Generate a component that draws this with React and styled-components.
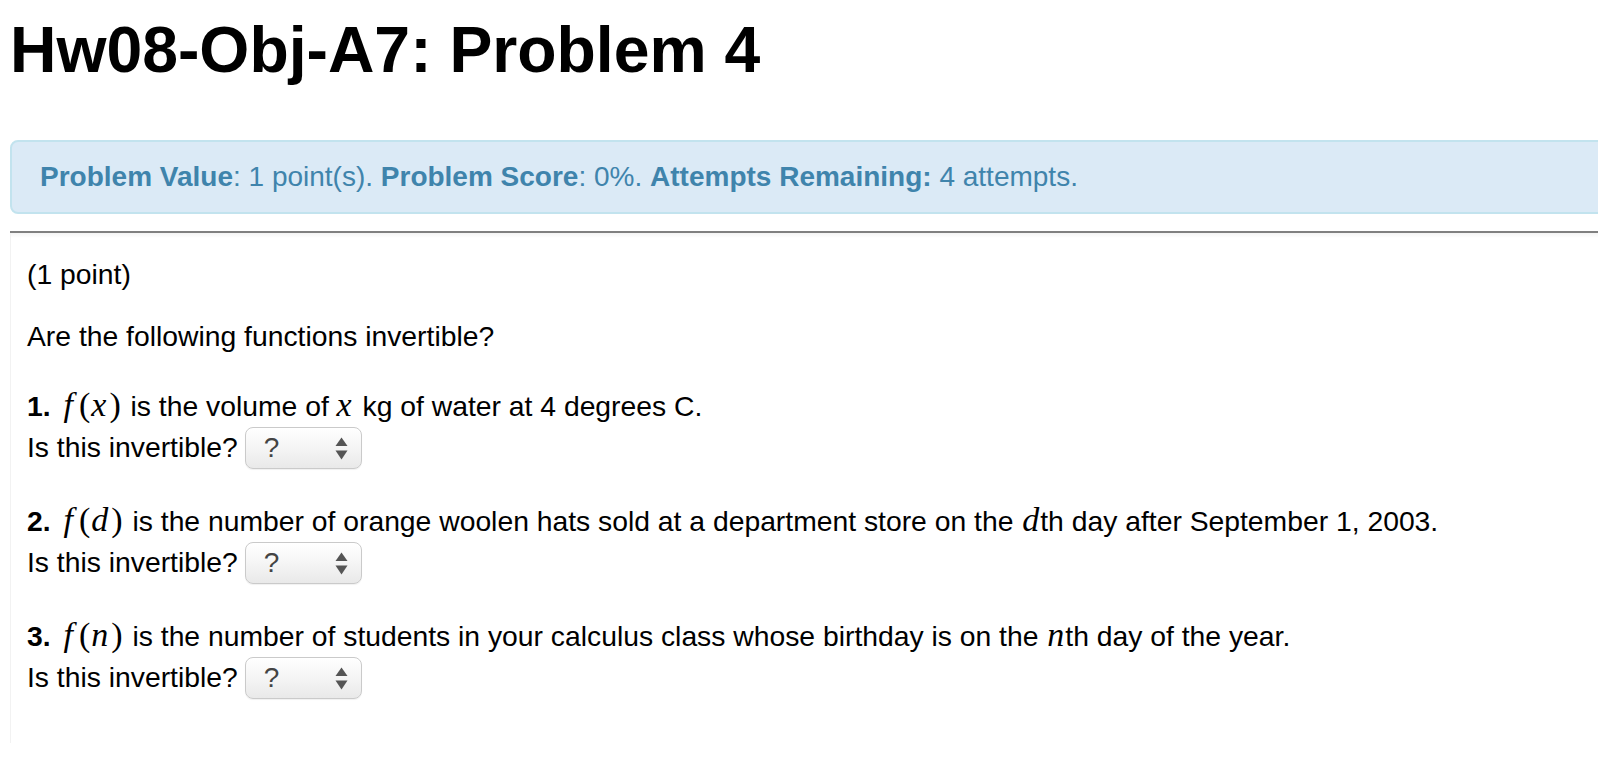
import React from 'react';
import styled, { createGlobalStyle } from 'styled-components';

const GlobalStyle = createGlobalStyle`
    html, body {
        margin: 0;
        padding: 0;
        background: #ffffff;
        overflow: hidden;
    }
    body {
        font-family: "Liberation Sans", Arial, Helvetica, sans-serif;
        color: #000000;
    }
`;

const Page = styled.div`
    width: 1640px;
    padding: 15px 0 0 10px;
`;

const Title = styled.h1`
    margin: 0 0 55px 0;
    font-size: 64.3px;
    line-height: 70px;
    font-weight: bold;
`;

const Alert = styled.div`
    background-color: #dbeaf6;
    border: 2px solid #c2e3ee;
    border-radius: 8px;
    padding: 15px 28px;
    color: #3f84ac;
    font-size: 28px;
    line-height: 40px;
`;

const Rule = styled.div`
    margin-top: 17px;
    height: 2px;
    background-color: #808080;
`;

const Problem = styled.div`
    box-sizing: border-box;
    height: 510px;
    border-left: 1px solid #f2f2f2;
    padding: 21px 0 0 16px;
    background: linear-gradient(#f4f4f4, #ffffff 5px);
    font-size: 28.3px;
    line-height: 41px;
`;

const Para = styled.div`
    margin-top: ${p => p.$gap || 0}px;
`;

const Line = styled.div`
    height: 41px;
    white-space: nowrap;
`;

const MathVar = styled.i`
    display: inline-block;
    font-family: "Liberation Serif", "Times New Roman", serif;
    font-size: 34px;
    line-height: 1;
    padding: 0 ${p => p.$r || 0}px 0 ${p => p.$l || 0}px;
`;

const Paren = styled.span`
    display: inline-block;
    font-family: "Liberation Serif", "Times New Roman", serif;
    font-size: 34px;
    line-height: 1;
    padding-right: ${p => p.$r || 0}px;
`;

const SelectBox = styled.span`
    display: inline-flex;
    align-items: center;
    justify-content: space-between;
    box-sizing: border-box;
    width: 117px;
    height: 42px;
    margin-left: 7px;
    padding: 0 13px 0 18px;
    border: 1px solid #cacaca;
    border-radius: 8px;
    background: linear-gradient(#ffffff 0%, #f6f6f6 45%, #e9e9e9 100%);
    box-shadow: inset 0 1px 0 #ffffff, 0 1px 1px rgba(0, 0, 0, 0.06);
    color: #444444;
    font-size: 28px;
    line-height: 40px;
`;

const Arrows = () => (
    <svg width="13" height="23" viewBox="0 0 13 23">
        <path d="M6.5 0.5 L12.5 9 L0.5 9 Z" fill="#555555" />
        <path d="M0.5 13.5 L12.5 13.5 L6.5 22.5 Z" fill="#555555" />
    </svg>
);

const Select = () => (
    <SelectBox>
        <span>?</span>
        <Arrows />
    </SelectBox>
);

const Fn = ({ v }) => (
    <>
        <MathVar $l={5} $r={6}>f</MathVar>
        <Paren>(</Paren>
        <MathVar $l={1} $r={3}>{v}</MathVar>
        <Paren $r={2}>)</Paren>
    </>
);

const items = [
    {
        n: 1, v: 'x', gap: 29,
        text: [' is the volume of ', <MathVar key="x" $l={0} $r={3}>x</MathVar>, ' kg of water at 4 degrees C.'],
    },
    {
        n: 2, v: 'd', gap: 33,
        text: [' is the number of orange woolen hats sold at a department store on the ', <MathVar key="d" $l={1} $r={1}>d</MathVar>, 'th day after September 1, 2003.'],
    },
    {
        n: 3, v: 'n', gap: 33,
        text: [' is the number of students in your calculus class whose birthday is on the ', <MathVar key="n" $l={1} $r={1}>n</MathVar>, 'th day of the year.'],
    },
];

export default function App() {
    return (
        <>
            <GlobalStyle />
            <Page>
                <Title>Hw08-Obj-A7: Problem 4</Title>
                <Alert>
                    <b>Problem Value</b>: 1 point(s). <b>Problem Score</b>: 0%. <b>Attempts Remaining:</b> 4 attempts.
                </Alert>
                <Rule />
                <Problem>
                    <Para>(1 point)</Para>
                    <Para $gap={21}>Are the following functions invertible?</Para>
                    {items.map(item => (
                        <Para key={item.n} $gap={item.gap}>
                            <Line>
                                <b>{item.n}.</b> <Fn v={item.v} />
                                {item.text}
                            </Line>
                            <Line>
                                Is this invertible?<Select />
                            </Line>
                        </Para>
                    ))}
                </Problem>
            </Page>
        </>
    );
}
